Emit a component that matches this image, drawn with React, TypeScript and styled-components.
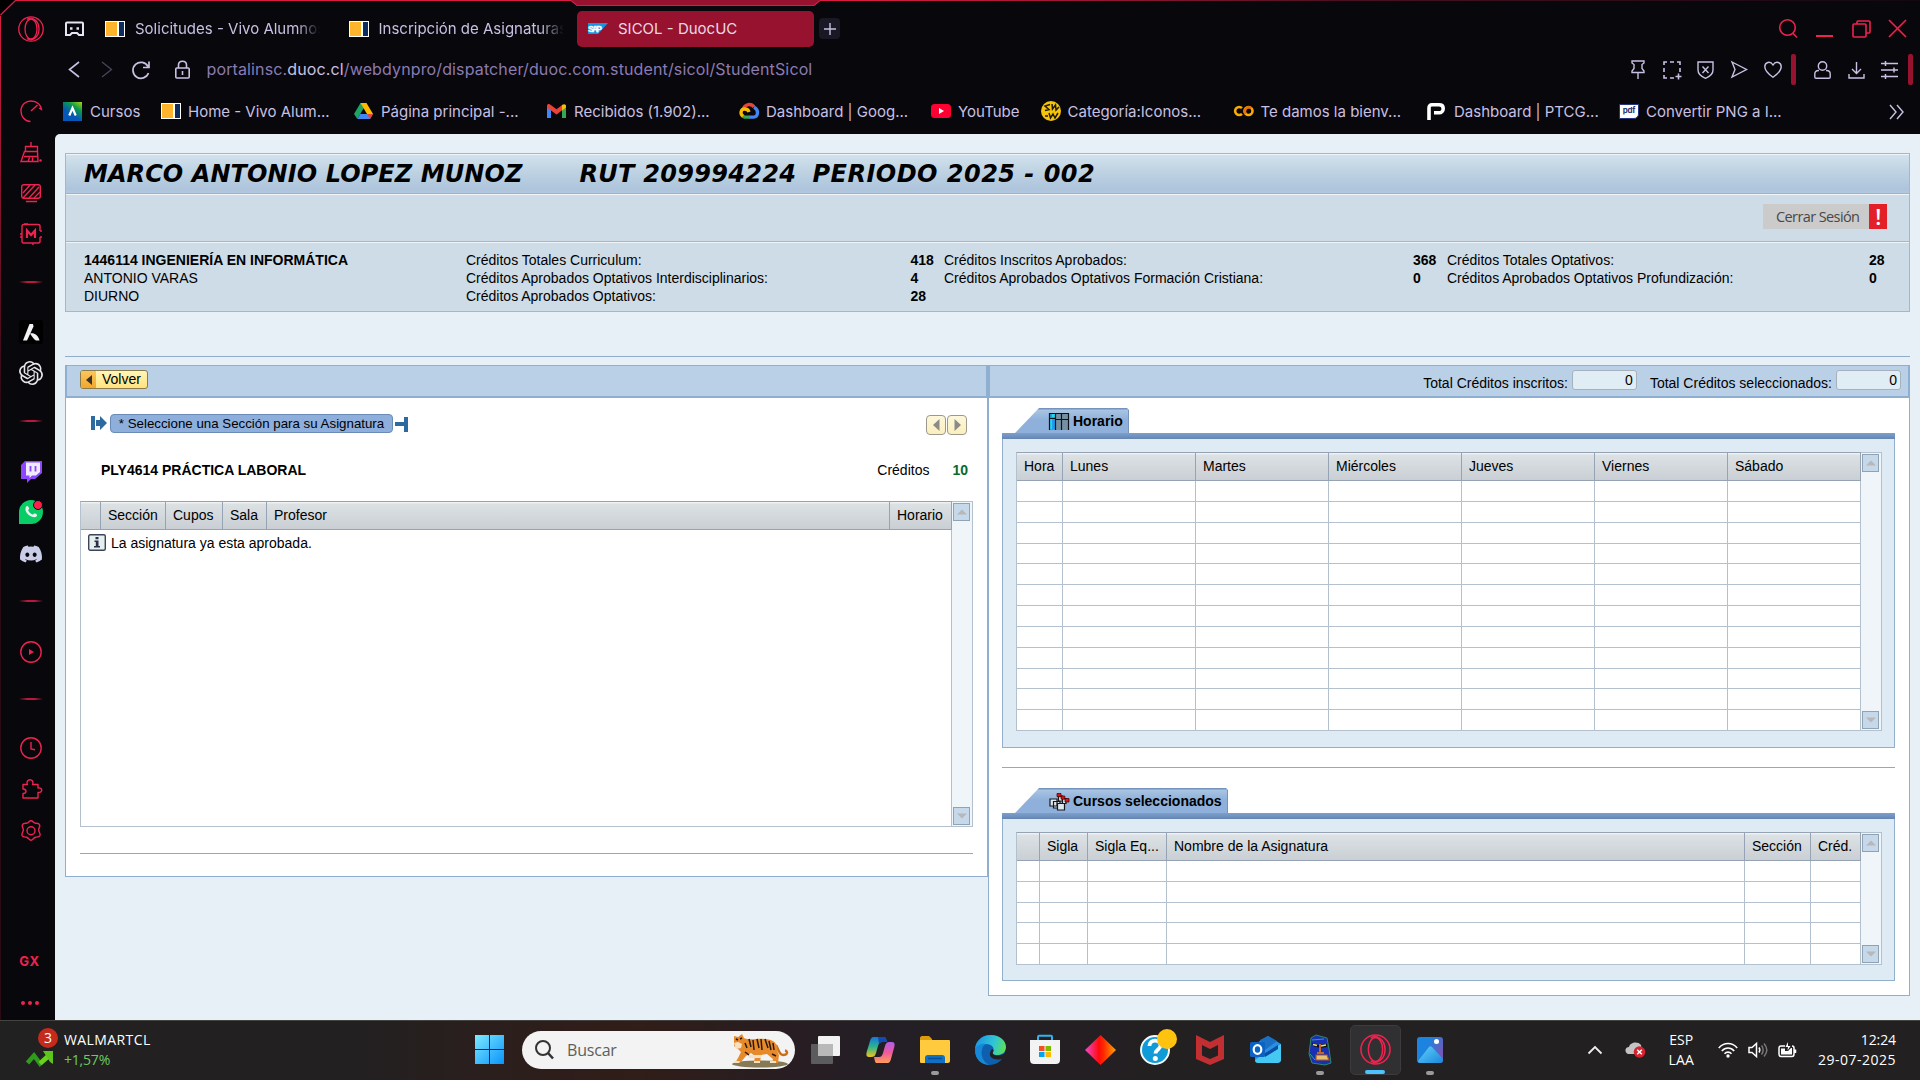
import React from "react";
import styled, { createGlobalStyle, css } from "styled-components";
import { FaDiscord } from "react-icons/fa";
import { SiOpenai } from "react-icons/si";

const RED = "#f0224f";
const LILAC = "#c9c0e2";
const UI = `Inter, "Noto Sans", sans-serif`;
const ARIAL = `"Liberation Sans", Arial, sans-serif`;
const SEGOE = `"Open Sans", "Noto Sans", sans-serif`;

const Global = createGlobalStyle`
  * { box-sizing: border-box; }
  html, body { margin: 0; padding: 0; background: #08070c; }
  body { width: 1920px; height: 1080px; overflow: hidden; }
  svg { display: block; flex: none; overflow: visible; }
`;

const Screen = styled.div`
  width: 1920px;
  height: 1080px;
  display: flex;
  flex-direction: column;
  background: #08070c;
`;

const Window = styled.div`
  position: relative;
  height: 1020px;
  display: flex;
  flex-direction: column;
`;

const Frame = styled.svg`
  position: absolute;
  left: 0;
  top: 0;
  pointer-events: none;
`;

/* ---------- browser chrome ---------- */

const TabStrip = styled.div`
  height: 56px;
  display: flex;
  align-items: center;
  padding: 1px 0 0 18px;
  font: 15px ${UI};
  color: ${LILAC};
`;

const Spacer = styled.div<{ $w: number }>`
  width: ${(p) => p.$w}px;
  flex: none;
`;

const Grow = styled.div`
  flex: 1;
`;

const Tab = styled.div<{ $w: number; $active?: boolean }>`
  width: ${(p) => p.$w}px;
  height: 36px;
  display: flex;
  align-items: center;
  gap: 10px;
  flex: none;
  border-radius: 5px;
  ${(p) =>
    p.$active &&
    css`
      background: #96122e;
      color: #ecd9e6;
      padding-left: 11px;
      gap: 10px;
    `}
`;

const TabTitle = styled.span<{ $fade?: boolean }>`
  white-space: nowrap;
  line-height: 22px;
  flex: none;
  ${(p) => p.$fade && css`mask-image: linear-gradient(90deg, #000 162px, transparent 185px);`}
`;

const NewTab = styled.div`
  width: 21px;
  height: 21px;
  margin-left: 5px;
  border-radius: 4px;
  background: #1a1824;
  display: flex;
  align-items: center;
  justify-content: center;
`;

const AddressRow = styled.div`
  height: 27px;
  display: flex;
  align-items: center;
  padding-left: 68px;
  font: 16px ${UI};
  color: #8b7bb0;
`;

const Url = styled.div`
  white-space: nowrap;
  line-height: 24px;
  letter-spacing: 0.13px;
  margin-top: -2px;
  b {
    font-weight: 400;
    color: ${LILAC};
  }
`;

const RedBar = styled.div`
  width: 5px;
  height: 31px;
  border-radius: 2px;
  background: #96122e;
`;

const Bookmarks = styled.div`
  height: 51px;
  padding: 6px 0 0 63px;
  display: flex;
  align-items: center;
  font: 15px ${UI};
  color: ${LILAC};
`;

const Bookmark = styled.div<{ $w: number }>`
  width: ${(p) => p.$w}px;
  flex: none;
  display: flex;
  align-items: center;
  gap: 8px;
  white-space: nowrap;
  line-height: 20px;
`;

const BookmarkIcon = styled.span`
  width: 19px;
  margin-top: -1px;
  flex: none;
`;

const VivoMark = styled.span`
  width: 20px;
  height: 16px;
  flex: none;
  border: 1px solid #fff;
  background: linear-gradient(90deg, #ffb52b 0 11px, #fff 11px 13px, #0d2b5c 13px);
`;

const Body = styled.div`
  flex: 1;
  display: flex;
  min-height: 0;
`;

const Sidebar = styled.div`
  width: 55px;
  margin-top: -40px;
  padding-left: 7px;
  display: flex;
  flex-direction: column;
  flex: none;
`;

const SideSlot = styled.div<{ $h: number }>`
  height: ${(p) => p.$h}px;
  flex: none;
  display: flex;
  align-items: center;
  justify-content: center;
`;

const SideLine = styled.div`
  width: 24px;
  height: 2px;
  background: linear-gradient(90deg, transparent, #b81a3d 35%, #b81a3d 65%, transparent);
`;

const SideFooter = styled.div`
  position: absolute;
  left: 0;
  bottom: 0;
  width: 62px;
  height: 70px;
  display: flex;
  flex-direction: column;
  align-items: center;
  justify-content: space-between;
  padding: 3px 0 15px;
`;

const GxLabel = styled.span`
  font: 700 13px ${UI};
  letter-spacing: 0.6px;
  color: ${RED};
  padding-right: 3px;
`;

const DotLabel = styled.div`
  display: flex;
  gap: 3px;
  padding-right: 3px;
  i {
    width: 4px;
    height: 4px;
    border-radius: 50%;
    background: ${RED};
  }
`;

/* ---------- SICOL page ---------- */

const Page = styled.main`
  flex: 1;
  padding: 19px 10px 0;
  background: #e8f0f7;
  border-top-left-radius: 5px;
  font: 14px ${ARIAL};
  color: #000;
`;

const StudentCard = styled.section`
  height: 159px;
  border: 1px solid #a4b7c8;
  background: #cedce7;
`;

const TitleBand = styled.h1`
  margin: 0;
  height: 40px;
  padding: 0 0 1px 18px;
  border-top: 1px solid #eef5fa;
  border-bottom: 1px solid #9fb2c6;
  background: linear-gradient(#d2e1ed, #bed2e2 45%, #adc4dc 90%, #b2c8dd);
  display: flex;
  align-items: center;
  white-space: pre;
  font: italic 700 24px "DejaVu Sans", Verdana, sans-serif;
`;

const TitlePart = styled.span<{ $w: number; $ls?: number }>`
  width: ${(p) => p.$w}px;
  flex: none;
  letter-spacing: ${(p) => p.$ls ?? 0}px;
`;

const ActionBand = styled.div`
  height: 48px;
  border-top: 1px solid #eef4f8;
  border-bottom: 1px solid #a4b7c8;
  display: flex;
  justify-content: flex-end;
  padding: 9px 22px 0 0;
`;

const Logout = styled.button`
  width: 124px;
  height: 25px;
  border: 0;
  padding: 0 0 0 13px;
  display: flex;
  align-items: center;
  justify-content: space-between;
  background: #cbcbcb;
  color: #484848;
  font: 14.5px "Open Sans", sans-serif;
  letter-spacing: -0.6px;
  b {
    width: 18px;
    height: 25px;
    background: #e32028;
    color: #fff;
    font: 600 22px/24px "Open Sans", sans-serif;
    text-align: center;
  }
`;

const Credits = styled.div`
  border-top: 1px solid #eef4f8;
  padding: 8px 0 0 18px;
  display: grid;
  grid-template-columns: 382px 444.5px 33.5px 469px 34px 422px auto;
  grid-auto-rows: 18px;
  line-height: 18px;
  b {
    font-weight: 700;
  }
`;

const Rule = styled.hr<{ $t: number; $b: number; $c?: string }>`
  border: 0;
  height: 1px;
  margin: ${(p) => p.$t}px 0 ${(p) => p.$b}px;
  background: ${(p) => p.$c ?? "#90aecb"};
`;

const Columns = styled.div`
  display: flex;
  align-items: flex-start;
`;

const Panel = styled.section<{ $w: number; $h: number }>`
  width: ${(p) => p.$w}px;
  height: ${(p) => p.$h}px;
  flex: none;
  background: #fff;
  border: 1px solid #90afd0;
`;

const PanelBar = styled.div<{ $right?: boolean }>`
  height: 32px;
  display: flex;
  background: #bad0e7;
  border: solid #8fafd2;
  border-width: 0 1px 2px;
  ${(p) =>
    p.$right
      ? css`
          justify-content: flex-end;
          padding: 4px 7px 0 0;
        `
      : css`
          padding: 4px 0 0 13px;
        `}
`;

const BackButton = styled.button`
  width: 68px;
  height: 19px;
  border: 1px solid #8b7a4a;
  border-radius: 3px;
  padding: 0;
  display: flex;
  align-items: center;
  gap: 6px;
  background: linear-gradient(#fff6b8, #ffe27e);
  font: 14px/16px ${ARIAL};
  color: #000;
  overflow: hidden;
`;

const BackText = styled.span`
  margin-top: -2px;
`;

const BackArrow = styled.span`
  width: 15px;
  height: 19px;
  background: linear-gradient(#fbc95c, #f0a52c);
  display: flex;
  align-items: center;
  justify-content: center;
`;

const TotalLabel = styled.label`
  line-height: 16px;
  margin: 5px 4px 0 13px;
`;

const TotalField = styled.output`
  width: 65px;
  height: 20px;
  border: 1px solid #a3b2bd;
  border-radius: 3px;
  background: #e1edf5;
  text-align: right;
  padding-right: 3px;
  line-height: 19px;
`;

const LeftBody = styled.div`
  padding: 16px 14px 0 14px;
`;

const Roadmap = styled.div`
  height: 21px;
  display: flex;
  align-items: flex-start;
  padding: 0 6px 0 11px;
`;

const StepPill = styled.div`
  width: 283px;
  height: 19px;
  margin: 0 2px 0 3px;
  border: 1px solid #6a8ab8;
  border-radius: 4px;
  background: #8eafdb;
  text-align: center;
  font-size: 13.3px;
  line-height: 17px;
`;

const ArrowButton = styled.button`
  width: 20px;
  height: 20px;
  margin: 1px 0 0 1px;
  padding: 0;
  border: 1px solid #9d988c;
  border-radius: 4px;
  background: linear-gradient(#fdf8dc, #fbefbe);
  display: flex;
  align-items: center;
  justify-content: center;
`;

const CourseRow = styled.div`
  height: 66px;
  padding: 4px 5px 0 21px;
  display: flex;
  align-items: center;
  b {
    font-weight: 700;
  }
`;

const CreditValue = styled.b`
  color: #0a6a2a;
  margin-left: 23px;
`;

const TableShell = styled.div<{ $h: number }>`
  height: ${(p) => p.$h}px;
  display: flex;
`;

const Grid = styled.div<{ $cols: string; $rows: string }>`
  display: grid;
  grid-template-columns: ${(p) => p.$cols};
  grid-template-rows: 28px ${(p) => p.$rows};
  border: solid #b3c1ce;
  border-width: 1px 0 0 1px;
  border-top-color: #96a3b5;
  background: #fff;
`;

const Th = styled.div`
  border: solid #96a3b5;
  border-width: 0 1px 1px 0;
  background: linear-gradient(#eef0f2 0 1px, #dce1e4 2px, #c9cfd4);
  padding-left: 7px;
  line-height: 26px;
  white-space: nowrap;
`;

const Td = styled.div`
  border: solid #b3c1ce;
  border-width: 0 1px 1px 0;
`;

const MessageCell = styled(Td)`
  grid-column: 1 / -1;
  padding: 4px 0 0 7px;
  display: flex;
  align-items: flex-start;
  gap: 5px;
  line-height: 18px;
`;

const Scroll = styled.div`
  width: 21px;
  border: 1px solid #b3c1ce;
  border-left: 0;
  background: #f0f5f9;
  padding: 1px 2px 1px 1px;
  display: flex;
  flex-direction: column;
  justify-content: space-between;
`;

const ScrollButton = styled.div`
  height: 18px;
  width: 17px;
  border: 1px solid #8fa3b5;
  background: #c5d9ea;
  display: flex;
  align-items: center;
  justify-content: center;
`;

const RightBody = styled.div`
  padding: 10px 14px 0 13px;
`;

const FolderTab = styled.div<{ $w: number }>`
  width: ${(p) => p.$w}px;
  height: 25px;
  margin-left: 13px;
  padding: 1px 0 0 34px;
  display: flex;
  align-items: center;
  gap: 4px;
  font-weight: 700;
  background: linear-gradient(#7593bd 0 1px, #a9c4e3 2px, #8eb0da 12px, #8eb0da);
  clip-path: polygon(0 100%, 24px 0, calc(100% - 2px) 0, 100% 2px, 100% 100%);
  border-right: 1px solid #7593bd;
  white-space: nowrap;
`;

const TabPanel = styled.div<{ $h: number }>`
  height: ${(p) => p.$h}px;
  border: 1px solid #92afcd;
  border-top: 0;
  background: #deeaf4;
  &::before {
    content: "";
    display: block;
    height: 6px;
    margin: 0 -1px;
    background: linear-gradient(#7d9fcc, #7093c1 50%, #6685b0);
  }
`;

const TabPanelInner = styled.div`
  padding: 13px 12px 0 13px;
`;

/* ---------- taskbar ---------- */

const Taskbar = styled.footer`
  height: 60px;
  border-top: 1px solid #454340;
  padding-bottom: 2px;
  display: flex;
  align-items: center;
  color: #fff;
  font: 14px/20px ${SEGOE};
  background: linear-gradient(
    90deg,
    #222121 0,
    #222021 350px,
    #2d1e1b 540px,
    #311d19 640px,
    #281d22 780px,
    #231f26 900px,
    #232021 1180px,
    #222020
  );
`;

const Widget = styled.div`
  width: 475px;
  padding-left: 26px;
  display: flex;
  align-items: center;
  gap: 10px;
`;

const WidgetIcon = styled.div`
  position: relative;
  width: 28px;
  height: 40px;
  display: flex;
  align-items: flex-end;
  padding-bottom: 3px;
`;

const Badge = styled.span`
  position: absolute;
  left: 12px;
  top: -2px;
  width: 20px;
  height: 20px;
  border-radius: 50%;
  background: #c42b1c;
  font-size: 14px;
  text-align: center;
  line-height: 20px;
`;

const Lines = styled.div<{ $align?: string }>`
  display: flex;
  flex-direction: column;
  line-height: 20px;
  text-align: ${(p) => p.$align ?? "left"};
  white-space: nowrap;
`;

const LineText = styled.span<{ $ls?: number; $c?: string }>`
  letter-spacing: ${(p) => p.$ls ?? 0}px;
  color: ${(p) => p.$c ?? "#fff"};
`;

const StartButton = styled.div`
  width: 47px;
`;

const SearchBox = styled.div`
  width: 273px;
  height: 38px;
  border-radius: 19px;
  background: #f3f3f3;
  display: flex;
  align-items: center;
  padding: 0 5px 0 13px;
  gap: 13px;
  color: #5e5e5e;
  font: 16px/22px ${SEGOE};
  letter-spacing: -0.2px;
`;

const AppSlot = styled.div<{ $active?: boolean }>`
  width: 51px;
  height: 50px;
  margin: 0 2px;
  border-radius: 5px;
  flex: none;
  display: flex;
  align-items: center;
  justify-content: center;
  position: relative;
  ${(p) =>
    p.$active &&
    css`
      background: #302f31;
      border: 1px solid #3c3b3d;
    `}
`;

const Running = styled.i<{ $active?: boolean }>`
  position: absolute;
  bottom: 0;
  left: 50%;
  width: ${(p) => (p.$active ? 20 : 8)}px;
  height: 4px;
  margin-left: ${(p) => (p.$active ? -10 : -4)}px;
  border-radius: 2px;
  background: ${(p) => (p.$active ? "#4cc2ff" : "#9a9a9a")};
`;

/* ---------- drawings ---------- */

const Line: React.FC<{
  w?: number; h?: number; vb?: string; c?: string; sw?: number; children: React.ReactNode;
}> = ({ w = 20, h = 20, vb, c = LILAC, sw = 1.4, children }) => (
  <svg width={w} height={h} viewBox={vb ?? `0 0 ${w} ${h}`} fill="none" stroke={c} strokeWidth={sw}>
    {children}
  </svg>
);

const OperaMark: React.FC<{ s: number }> = ({ s }) => (
  <svg width={s} height={s} viewBox="0 0 26 26" fill="none" stroke={RED} strokeWidth="1.3">
    <circle cx="13" cy="13" r="12.2" />
    <ellipse cx="13" cy="13" rx="6" ry="10" />
    <path d="M9 3.4C13 .2 21 4 21 13s-8 12.800-12 9.600" />
  </svg>
);

const Cursos = () => (
  <svg width="19" height="19" viewBox="0 0 19 19">
    <defs>
      <linearGradient id="cur" x1="1" y1="0" x2="0.300" y2="1">
        <stop offset="0" stopColor="#a6d80c" />
        <stop offset=".35" stopColor="#0a9a4c" />
        <stop offset=".7" stopColor="#0557b8" />
      </linearGradient>
    </defs>
    <path d="M0 0h19v19H0z" fill="url(#cur)" />
    <path d="M6.300 13.500 9.500 6 12.700 13.500" fill="none" stroke="#fff" strokeWidth="2.200" />
  </svg>
);

const Drive = () => (
  <svg width="19" height="17" viewBox="0 0 19 17">
    <path d="M6.500 0h6L9.500 5.500 3.300 16 0 11z" fill="#1ea362" />
    <path d="M6.500 0h6l6.500 11h-6z" fill="#ffba00" />
    <path d="M3.300 16 6.300 11H19l-3 5z" fill="#4285f4" />
    <path d="M13 11h6l-3 5z" fill="#ea4335" />
  </svg>
);

const Gmail = () => (
  <svg width="19" height="15" viewBox="0 0 19 15">
    <path d="M0 2v12h4V5z" fill="#4285f4" />
    <path d="M19 2v12h-4V5z" fill="#34a853" />
    <path d="M0 2C0 0 2-.5 3.500.7L9.500 5.300 15.500.7V6l-6 4.600L4 6.500 0 3.500z" fill="#ea4335" />
    <path d="M15 1.100C17-.5 19 .2 19 2v1.500L15 6.500z" fill="#fbbc04" />
  </svg>
);

const Cloud = () => (
  <svg width="20" height="16" viewBox="0 0 20 16" fill="none" strokeWidth="3.300">
    <path d="M4.500 5.500C6 1.500 12-.3 15 4" stroke="#ea4335" />
    <path d="M15 4.200C20 6.500 19.500 14 14.500 14.200H10" stroke="#4285f4" />
    <path d="M10.500 14.200H5.500L3.500 13" stroke="#34a853" />
    <path d="M4 13.300C.5 10.500 2 6 5.500 6c2 0 4 1 4.500 3" stroke="#fbbc04" />
  </svg>
);

const YouTube = () => (
  <svg width="20" height="14" viewBox="0 0 20 14">
    <rect width="20" height="14" rx="3.500" fill="#ff0033" />
    <path d="M8 4v6l5-3z" fill="#fff" />
  </svg>
);

const Wiki = () => (
  <svg width="20" height="20" viewBox="0 0 20 20">
    <circle cx="10" cy="10" r="10" fill="#f6c40a" />
    <path d="M9 3.500 4 5l4 3.500-4 1M11 3l.5 5 3-4 .5 5 3-3M4 15h3M8 12l1.500 5L12 13l2 4 3-5" fill="none" stroke="#1c1a10" strokeWidth="1.500" />
  </svg>
);

const Colab = () => (
  <svg width="20" height="12" viewBox="0 0 20 12" fill="none" strokeWidth="2.600">
    <path d="M8 3.200A4 4 0 1 0 8 8.800" stroke="#f9ab00" />
    <circle cx="14.500" cy="6" r="4" stroke="#f9ab00" />
    <path d="M11.700 8.800A4 4 0 0 1 17.300 3.200" stroke="#e8710a" />
  </svg>
);

const PMark = () => (
  <svg width="18" height="17" viewBox="0 0 18 17" fill="none" stroke="#fff" strokeWidth="3.600">
    <path d="M2 17V5c0-2 1-3.200 3-3.200h7c2.500 0 4.200 1.200 4.200 3.600S14.500 9.800 12 9.800H7" />
  </svg>
);

const PdfBox = styled.span`
  display: block;
  width: 20px;
  height: 15px;
  background: #fff;
  border: 1px solid #26327a;
  color: #26327a;
  font: 700 8px/10px ${UI};
  border-bottom-right-radius: 5px;
  letter-spacing: -0.2px;
  text-align: center;
`;

const SapMark = () => (
  <svg width="20" height="11" viewBox="0 0 20 11">
    <path d="M0 0h20L10 11H0z" fill="#1298e0" />
    <text x="0" y="8.500" fontFamily="Liberation Sans" fontWeight="700" fontSize="8.500" fill="#fff" stroke="#fff" strokeWidth=".4" textLength="14">SAP</text>
  </svg>
);

const Tri: React.FC<{ d: string; w?: number; h?: number; c?: string }> = ({ d, w = 10, h = 6, c = "#b9b7b8" }) => (
  <svg width={w} height={h} viewBox={`0 0 ${w} ${h}`}>
    <path d={d} fill={c} />
  </svg>
);

const InfoIcon = () => (
  <svg width="18" height="17" viewBox="0 0 18 17">
    <rect x=".7" y=".7" width="16.600" height="15.600" rx="1.500" fill="#e4efee" stroke="#3b4458" strokeWidth="1.400" />
    <path d="M7.500 3h3v2.200h-3zM6.500 6.500h4V12H12v1.600H6V12h1.800V8H6.500z" fill="#2b2f48" />
  </svg>
);

const CalendarIcon = () => (
  <svg width="20" height="17" viewBox="0 0 20 17">
    <path d="M0 0h20v17H0z" fill="#7590a0" />
    <path d="M1 1h5v15H1z" fill="#1d9df0" />
    <path d="M1 6h2v10H1zM3 1h3v3H3z" fill="#22d6ec" />
    <path d="M.5 17V.5h19V17M6.500 1v16M12.500 1v16M6 6.500h14M1 5.500h5" fill="none" stroke="#0b1116" strokeWidth="1.200" />
  </svg>
);

const CoursesIcon = () => (
  <svg width="20" height="17" viewBox="0 0 20 17">
    <g fill="#dfe6ec" stroke="#15181c" strokeWidth="1.200">
      <path d="M9.500 3h4v5h-4zM13.500 5.500h3.500v5h-3.500z" />
      <path d="M1 6h7v7H1zM4.500 8.500H11V15H4.500z" />
      <path d="M8.500 10.500h7V17h-7z" />
    </g>
    <path d="M8 .5h4v3.200H8zM12 3h3.800v3.200H12zM16 5.500h4V9h-4z" fill="#e01414" stroke="#300" strokeWidth=".7" />
  </svg>
);

const Tiger = () => (
  <svg width="58" height="34" viewBox="0 0 58 34">
    <ellipse cx="28" cy="31" rx="28" ry="3.500" fill="#857956" />
    <path d="M44 12c3 5 3 10 7 10 5 0 5-4 2-4.500" fill="none" stroke="#c96f1c" strokeWidth="2.400" />
    <path d="M2 3l4 1 4-3 2 4c6 3 14 0 20 1 7 0 11 2 13 7 1 4 0 6 2 9l-1 8h-6l1-4-6-5-6 1-1 8h-6l1-7-4-3-5 3-6 7H3l3-5 3-6-3-3-4-3z" fill="#e68a2c" />
    <path d="M2 10l4-1 4 2-1 4-5 1zM16 22l8 0 6 0-1 3-12 0zM2 28h6l-1 2H2zM22 28h6v2h-6zM38 28h6v2h-6z" fill="#f6e0c4" />
    <path d="M17 6l2 8M21 7l1 10M25 6l2 9M29 6l1 11M33 6l3 9M37 8l2 9M41 10l1 7M13 10l2 5M4 6l2 1M8 6l2-1M40 21l4 2M13 19l4 3" stroke="#2c1a0c" strokeWidth="1.500" fill="none" />
  </svg>
);

const apps: { icon: React.ReactNode; running?: boolean; active?: boolean }[] = [
  {
    icon: (
      <svg width="29" height="28" viewBox="0 0 29 28">
        <rect x="0" y="8" width="22" height="20" rx="1" fill="#5c5b5d" />
        <rect x="7" y="0" width="22" height="20" rx="1" fill="#f2f2f2" />
        <path d="M7 8h15v12H7z" fill="#b9b9ba" />
      </svg>
    ),
  },
  {
    icon: (
      <svg width="29" height="26" viewBox="0 0 29 26">
        <defs>
          <linearGradient id="cpa" x1="0" y1="0" x2="0" y2="1">
            <stop offset="0" stopColor="#1377dd" /><stop offset=".5" stopColor="#2db58c" /><stop offset="1" stopColor="#f2c61c" />
          </linearGradient>
          <linearGradient id="cpb" x1="0" y1="0" x2="0" y2="1">
            <stop offset="0" stopColor="#b25cf0" /><stop offset=".5" stopColor="#ee5a9a" /><stop offset="1" stopColor="#ff9d5a" />
          </linearGradient>
        </defs>
        <path d="M7 0h11c2 0 2 2 3 5h-5c-2 0-3 1-4 4l-2 7c-1 3-2 4-5 4H3c-3 0-3-3-2-6L4 4C5 1 6 0 7 0z" fill="url(#cpa)" />
        <path d="M22 26H11c-2 0-2-2-3-6h5c2 0 3-1 4-4l2-7c1-3 2-4 4-4h3c3 0 3 3 2 6l-3 11c-1 3-2 4-3 4z" fill="url(#cpb)" />
        <path d="M12 0h6c2 0 2 2 3 5h-5c-2 0-2 1-3 2z" fill="#1248b8" />
      </svg>
    ),
  },
  {
    running: true,
    icon: (
      <svg width="30" height="27" viewBox="0 0 30 27">
        <path d="M0 2c0-1 1-2 2-2h7l3 3v4H0z" fill="#dd9a0c" />
        <path d="M0 4h29c1 0 1 1 1 1v20c0 1-1 2-2 2H1c-1 0-1-1-1-2z" fill="#ffca3e" />
        <path d="M5 27v-5c0-2 1-3 3-3h14c2 0 3 1 3 3v5z" fill="#0f70c4" />
        <path d="M8 22.500h14" stroke="#0a4f96" strokeWidth="1.500" />
      </svg>
    ),
  },
  {
    icon: (
      <svg width="31" height="30" viewBox="0 0 31 30">
        <defs>
          <linearGradient id="edg" x1="0" y1=".3" x2="1" y2=".5">
            <stop offset="0" stopColor="#1a94e0" /><stop offset=".6" stopColor="#31c4d8" /><stop offset="1" stopColor="#5be05a" />
          </linearGradient>
        </defs>
        <circle cx="15" cy="15" r="15" fill="#0e60ae" />
        <path d="M0 15C0 6 7 0 16 0c9 0 15 6 15 12 0 6-5 8-9 8-3 0-5-1-4-3 2-4-1-8-7-8-5 0-9 2-11 6z" fill="url(#edg)" />
        <path d="M0 15c2-5 7-7 11-6-4 2-5 7-4 12 1 4 4 8 8 9C6 30 0 24 0 15z" fill="#1787d8" />
        <path d="M18 17c-1 2 1 3.500 5 3.500 3 0 5-1 7-2.500l1 1-2 4c-2 1-4 1.500-6 1.500-6 0-9-3-8-6.500.500-2 1.500-4 2.500-4 1 1 1.500 2 .5 3z" fill="#232021" />
      </svg>
    ),
  },
  {
    icon: (
      <svg width="30" height="29" viewBox="0 0 30 29">
        <path d="M8 6V2c0-1 1-1.200 1-1.200h12c1 0 1 1 1 1.200v4" fill="none" stroke="#2fb4ee" strokeWidth="2" />
        <path d="M0 5h30v20c0 3-2 4-4 4H4c-2 0-4-1-4-4z" fill="#f3f3f3" />
        <path d="M9 11h5.500v5H9z" fill="#f25022" /><path d="M15.500 11H21v5h-5.500z" fill="#7fba00" />
        <path d="M9 17h5.500v5H9z" fill="#00a4ef" /><path d="M15.500 17H21v5h-5.500z" fill="#ffb900" />
      </svg>
    ),
  },
  {
    icon: (
      <svg width="31" height="30" viewBox="0 0 31 30">
        <defs>
          <linearGradient id="dia"><stop offset="0" stopColor="#f04ad0" /><stop offset=".45" stopColor="#ff0a0a" /><stop offset=".6" stopColor="#ff2a00" /><stop offset="1" stopColor="#ffa400" /></linearGradient>
        </defs>
        <path d="M15.500 0 31 15 15.500 30 0 15z" fill="url(#dia)" />
      </svg>
    ),
  },
  {
    icon: (
      <svg width="31" height="30" viewBox="0 0 31 30">
        <circle cx="15" cy="15" r="14" fill="#0f9ad8" stroke="#f2f8fb" strokeWidth="2" />
        <path d="M9.500 11c0-7 11-7 11-.5 0 4-5 4-5 8" fill="none" stroke="#fff" strokeWidth="3.800" />
        <circle cx="15.300" cy="23.500" r="2.500" fill="#fff" />
        <circle cx="27" cy="4" r="10" fill="#ffc20e" />
      </svg>
    ),
  },
  {
    icon: (
      <svg width="28" height="30" viewBox="0 0 28 30">
        <path d="M0 0l14 7L28 0v24l-14 6L0 24zM6 10v10.500l8 3.500 8-3.500V10l-8 4z" fill="#c22f32" fillRule="evenodd" />
      </svg>
    ),
  },
  {
    icon: (
      <svg width="31" height="27" viewBox="0 0 31 27">
        <path d="M5 8 18 0l13 8v15c0 2-1 4-4 4H9c-3 0-4-2-4-4z" fill="#2a8fe0" />
        <path d="M10 4 18 0l9 5-12 9z" fill="#1a6fc4" />
        <path d="M15 17 31 8v16c0 2-2 3-4 3H8c-2 0-3-1-3-3z" fill="#45c8f2" />
        <path d="M15 17l13-8v4L15 21z" fill="#0b4da0" />
        <rect y="6" width="15" height="15" rx="1.500" fill="#0a62c4" />
        <ellipse cx="7.500" cy="13.500" rx="3.800" ry="4.300" fill="none" stroke="#fff" strokeWidth="2.200" />
      </svg>
    ),
  },
  {
    running: true,
    icon: (
      <svg width="24" height="30" viewBox="0 0 24 30">
        <path d="M3 3 8 0l11 3 2 11 2 14-6 2-13-2-3-9z" fill="#1730b4" stroke="#2c8a66" strokeWidth="1" />
        <path d="M4 8l6 2 9-1v3l-7 1-7-2z" fill="#101010" />
        <path d="M5 9.500l4 1M13 11l5-1" stroke="#efe05c" strokeWidth="1.500" />
        <path d="M12 9v8M9 18h7" stroke="#c2672c" strokeWidth="2" />
        <path d="M8 20h11l2 5-13 0z" fill="#e6c070" stroke="#b5531c" strokeWidth="1.200" />
        <path d="M2 19l5 6M4 5l12-1" stroke="#37a07a" strokeWidth="1" />
      </svg>
    ),
  },
  { running: true, active: true, icon: <OperaMark s={31} /> },
  {
    running: true,
    icon: (
      <svg width="26" height="26" viewBox="0 0 26 26">
        <defs>
          <linearGradient id="pho" x1="0" y1="0" x2="1" y2=".6"><stop offset=".4" stopColor="#1b84e0" /><stop offset="1" stopColor="#7a55b4" /></linearGradient>
          <linearGradient id="phm" x1="0" y1="0" x2="1" y2="1"><stop offset="0" stopColor="#5fd4fb" /><stop offset="1" stopColor="#1a86dc" /></linearGradient>
        </defs>
        <rect width="26" height="26" rx="3" fill="url(#pho)" />
        <path d="M1 24 12 10c1-1 2-1 3 0l11 12v1c0 2-1 3-3 3H3c-1 0-2-1-2-2z" fill="url(#phm)" />
        <circle cx="19.500" cy="4.500" r="2.500" fill="#fff" />
      </svg>
    ),
  },
];

/* ---------- data ---------- */

const bookmarks: { w: number; icon: React.ReactNode; label: string }[] = [
  { w: 98, icon: <Cursos />, label: "Cursos" },
  { w: 193, icon: <VivoMark as="div" />, label: "Home - Vivo Alum..." },
  { w: 193, icon: <Drive />, label: "Página principal -..." },
  { w: 192, icon: <Gmail />, label: "Recibidos (1.902)..." },
  { w: 192, icon: <Cloud />, label: "Dashboard | Goog..." },
  { w: 109.5, icon: <YouTube />, label: "YouTube" },
  { w: 193, icon: <Wiki />, label: "Categoría:Iconos..." },
  { w: 193.5, icon: <Colab />, label: "Te damos la bienv..." },
  { w: 192, icon: <PMark />, label: "Dashboard | PTCG..." },
  { w: 180, icon: <PdfBox>pdf</PdfBox>, label: "Convertir PNG a I..." },
];

const days = ["Hora", "Lunes", "Martes", "Miércoles", "Jueves", "Viernes", "Sábado"];
const courseCols = ["", "Sigla", "Sigla Eq...", "Nombre de la Asignatura", "Sección", "Créd."];
const sectionCols = ["", "Sección", "Cupos", "Sala", "Profesor", "Horario"];

const ScrollBar = () => (
  <Scroll>
    <ScrollButton><Tri d="M0 5.500 5 .5l5 5z" /></ScrollButton>
    <ScrollButton><Tri d="M0 .5h10l-5 5z" /></ScrollButton>
  </Scroll>
);

const EmptyTable: React.FC<{ h: number; cols: string; heads: string[]; rows: number }> = ({ h, cols, heads, rows }) => (
  <TableShell $h={h}>
    <Grid $cols={cols} $rows={`repeat(${rows}, 1fr)`}>
      {heads.map((t, i) => <Th key={i}>{t}</Th>)}
      {Array.from({ length: rows * heads.length }, (_, i) => <Td key={i} />)}
    </Grid>
    <ScrollBar />
  </TableShell>
);

const SideIcons = () => (
  <Sidebar>
    <SideSlot $h={34}>
      <Line w={22} h={22} c={RED}><path d="M10.500 21.500C4 21 1 16 1 11 1 4.500 6 1 11 1c6 0 10 4 10.500 8.500L19 8M11 11l6.500-6" /></Line>
    </SideSlot>
    <SideSlot $h={48}>
      <Line w={22} h={21} c={RED}><path d="M11 0v4M5.500 9.500V4.500h12v5M4.500 9.500h13l.5 10H1zM8 19.500l1.500-4M12.500 19.500v-4M4 14.500h14" /><circle cx="20.500" cy="18.500" r="1.300" fill={RED} stroke="none" /></Line>
    </SideSlot>
    <SideSlot $h={33}>
      <Line w={20} h={18} c={RED}><rect x=".7" y=".7" width="18.600" height="13.600" rx="2" /><path d="M2 9 9 1M2 14 14 1M8 14 18 3M13 14l6-6M5 17.500h11" /></Line>
    </SideSlot>
    <SideSlot $h={49}>
      <Line w={22} h={22} c={RED}><path d="M2 8V3c0-1 .5-1.500 1.500-1.500H18c1 0 2 .5 2 1.500v5M2 13v5c0 1 .5 2 1.500 2H18c1 0 2-.5 2-1.500V14M2 8v6M0 11h2M0 14h2M20 8h2M20 14h2M7 0v1M13 20v2M5 0v1" /><path d="M7 15V7.500l4 4.500 4-4.500V15" strokeWidth="2.200" /></Line>
    </SideSlot>
    <SideSlot $h={48}><SideLine /></SideSlot>
    <SideSlot $h={51}>
      <svg width="24" height="24" viewBox="0 0 24 24"><rect width="24" height="24" rx="3" fill="#000" /><path d="M4 20.500 10.500 4h3.500l.5 2.500L8 20.500z" fill="#f2f2f2" /><path d="M11 13.500c4-1 8 1.500 9.500 7h-3.500c-2-1-4-4-6-7z" fill="#f2f2f2" /></svg>
    </SideSlot>
    <SideSlot $h={32}><SiOpenai size={24} color="#e6e6ea" /></SideSlot>
    <SideSlot $h={64}><SideLine /></SideSlot>
    <SideSlot $h={37}>
      <svg width="21" height="22" viewBox="0 0 21 22"><path d="M0 4 4 0h17v12l-7 6h-4l-4 4v-4H0z" fill="#8f46ff" /><path d="M5 1.500h14V11l-4 3.500h-4L8.500 17v-2.500H5z" fill="#efeafc" /><path d="M9.500 5v5.500M14.500 5v5.500" stroke="#8f46ff" strokeWidth="1.800" /></svg>
    </SideSlot>
    <SideSlot $h={43}>
      <svg width="24" height="24" viewBox="0 0 24 24"><path d="M0 24V12A12 12 0 1 1 12 24H5z" fill="#08cc66" /><path d="M7 6.500c1.500-1.500 2.500 0 3 1.500.5 1.200-1.500 1.500-.5 3 1 1.800 2.500 3 4 3.500 1 .3 1-1.500 2.500-1s3 1.500 1.500 3c-3 3-12-3-11-8z" fill="#efeff2" /><circle cx="19" cy="5" r="4.500" fill="#ff1f4b" stroke="#08070c" strokeWidth="1" /></svg>
    </SideSlot>
    <SideSlot $h={41}><FaDiscord size={24} color="#c9cde8" /></SideSlot>
    <SideSlot $h={54}><SideLine /></SideSlot>
    <SideSlot $h={48}>
      <Line w={22} h={22} c={RED}><circle cx="11" cy="11" r="10.200" /><path d="M9 8v6l5-3z" fill={RED} stroke="none" /></Line>
    </SideSlot>
    <SideSlot $h={46}><SideLine /></SideSlot>
    <SideSlot $h={51}>
      <Line w={22} h={22} c={RED}><circle cx="11" cy="11" r="10.200" /><path d="M11 5v7l4 .8" /></Line>
    </SideSlot>
    <SideSlot $h={31}>
      <Line w={21} h={20} c={RED}><path d="M2 5.500h4.500C5 2.500 7 .8 9 .8s4 1.700 2.500 4.700H17V9c5-1 5 5 0 4.500V19H2v-4.500c4 0 4-4.500 0-4.500z" strokeLinejoin="round" /></Line>
    </SideSlot>
    <SideSlot $h={54}>
      <Line w={22} h={22} c={RED}><path d="M11 .8c2 0 2.500 2.500 4.500 2.500 1.500 0 3.500-.3 4.200 1.700.6 2-1.200 3-1 5 0 2.500 2 3 1.300 5.500-.8 2-2.800 1.500-4.500 1.700-2 .3-2.500 3-4.500 3s-2.500-2.700-4.500-3c-1.700-.2-3.700.3-4.500-1.700C1.300 13 3.300 12.500 3.300 10c.2-2-1.600-3-1-5C3 3 5 3.300 6.500 3.300 8.500 3.300 9 .8 11 .8z" /><circle cx="11" cy="10.700" r="4" /></Line>
    </SideSlot>
  </Sidebar>
);

export default function App() {
  return (
    <Screen>
      <Global />
      <Window>
        <TabStrip>
          <OperaMark s={26} />
          <Spacer $w={21} />
          <Line w={19} h={16} c="#e8e4f4" sw={2}>
            <path d="M2 1.500h15c.5 0 1 .5 1 1V14h-4l-2-2H7l-2 2H1V2.500c0-.5.500-1 1-1z" />
            <path d="M5 7.500h2.500M11.500 7.500H14" strokeWidth="2.600" />
          </Line>
          <Spacer $w={21} />
          <Tab $w={243.5}><VivoMark /><TabTitle $fade>Solicitudes - Vivo Alumnos</TabTitle></Tab>
          <Tab $w={228.5}><VivoMark /><TabTitle $fade>Inscripción de Asignaturas</TabTitle></Tab>
          <Tab $w={237} $active><SapMark /><TabTitle>SICOL - DuocUC</TabTitle></Tab>
          <NewTab><Line w={12} h={12}><path d="M6 0v12M0 6h12" /></Line></NewTab>
          <Grow />
          <Line w={19} h={19} c={RED} sw={1.6}><circle cx="8.500" cy="8.500" r="7.800" /><path d="m13.500 14 4.500 4.500" /></Line>
          <Spacer $w={18} />
          <Line w={17} h={18} c={RED} sw={2}><path d="M0 16h17" /></Line>
          <Spacer $w={19} />
          <Line w={19} h={18} c={RED} sw={1.6}><rect x="1" y="4" width="13" height="13" rx="1" /><path d="M5 4V2c0-.6.400-1 1-1h11c.6 0 1 .400 1 1v10c0 .6-.4 1-1 1h-3" /></Line>
          <Spacer $w={18} />
          <Line w={17} h={17} c={RED} sw={1.6}><path d="M0 0l17 17M17 0 0 17" /></Line>
          <Spacer $w={14} />
        </TabStrip>

        <AddressRow>
          <Line w={12} h={15} sw={1.6}><path d="M11 0 1.500 7.500 11 15" /></Line>
          <Spacer $w={21} />
          <Line w={12} h={15} sw={1.3} c="#4a455c"><path d="M1 0l9.500 7.500L1 15" /></Line>
          <Spacer $w={18.5} />
          <Line w={18} h={18} sw={1.7}><path d="M16 5.500A8 8 0 1 0 16.500 12M17 .5v6h-6" /></Line>
          <Spacer $w={25} />
          <Line w={15} h={19} sw={1.6}><rect x=".8" y="8" width="13.400" height="10" rx="1" /><path d="M3.500 8V5c0-5 8-5 8 0v3M7.500 11v4" /></Line>
          <Spacer $w={17} />
          <Url>portalinsc.<b>duoc.cl</b>/webdynpro/dispatcher/duoc.com.student/sicol/StudentSicol</Url>
          <Grow />
          <Line w={14} h={19}><path d="M1 1h12v2l-2 1.500v4l2 2.500v1.500H1V11l2-2.500v-4L1 3zM7 12.500V19" /></Line>
          <Spacer $w={18} />
          <Line w={19} h={18} sw={1.6}><path d="M1 4V1h3M7 1h4M14 1h3v3M17 7v4M1 7v4M1 14v3h3M7 17h4M12.500 15.500h6M15.500 12.500v6" /></Line>
          <Spacer $w={15} />
          <Line w={17} h={18}><path d="M1 1h15v8c0 4-3 6.500-7.500 8.300C4 15.500 1 13 1 9zM5.500 5.500l6 6.500M11.500 5.500l-6 6.500" /></Line>
          <Spacer $w={17} />
          <Line w={16} h={17}><path d="M1 1l14.500 7.500L1 16l3-7.500z" /></Line>
          <Spacer $w={17} />
          <Line w={18} h={17}><path d="M9 16.300C5 13.500.8 10 .8 5.800.8 1.500 6-.8 9 4c3-4.800 8.200-2.500 8.200 1.800 0 4.200-4.200 7.700-8.200 10.500z" /></Line>
          <Spacer $w={9} />
          <RedBar />
          <Spacer $w={18} />
          <Line w={17} h={18}><circle cx="8.500" cy="5" r="4.200" /><path d="M5 9.500h-.500C2 9.500.8 11 .8 13v3c0 .8.500 1.200 1.200 1.200h13c.7 0 1.200-.4 1.200-1.200v-3c0-2-1.200-3.500-3.700-3.500H12" /></Line>
          <Spacer $w={17} />
          <Line w={17} h={18}><path d="M8.500 1v11M4 8l4.500 4.500L13 8M1 13v4h15v-4" /></Line>
          <Spacer $w={16} />
          <Line w={17} h={18} sw={1.5}><path d="M0 2.500h17M0 9h17M0 15.500h17M4.500 0v5M13 6.500v5M4.500 13v5" /></Line>
          <Spacer $w={10} />
          <RedBar />
          <Spacer $w={7} />
        </AddressRow>

        <Bookmarks>
          {bookmarks.map((b) => (
            <Bookmark key={b.label} $w={b.w}><BookmarkIcon>{b.icon}</BookmarkIcon>{b.label}</Bookmark>
          ))}
          <Grow />
          <Line w={15} h={14}><path d="M1 0l6 7-6 7M8 0l6 7-6 7" /></Line>
          <Spacer $w={16} />
        </Bookmarks>

        <Body>
          <SideIcons />
          <Page>
            <StudentCard>
              <TitleBand>
                <TitlePart $w={495.5} $ls={0.08}>MARCO ANTONIO LOPEZ MUNOZ</TitlePart>
                <TitlePart $w={233} $ls={0.28}>RUT 209994224</TitlePart>
                <TitlePart $w={300} $ls={0.48}>PERIODO 2025 - 002</TitlePart>
              </TitleBand>
              <ActionBand><Logout>Cerrar Sesión<b>!</b></Logout></ActionBand>
              <Credits>
                <b>1446114 INGENIERÍA EN INFORMÁTICA</b>
                <span>Créditos Totales Curriculum:</span><b>418</b>
                <span>Créditos Inscritos Aprobados:</span><b>368</b>
                <span>Créditos Totales Optativos:</span><b>28</b>
                <span>ANTONIO VARAS</span>
                <span>Créditos Aprobados Optativos Interdisciplinarios:</span><b>4</b>
                <span>Créditos Aprobados Optativos Formación Cristiana:</span><b>0</b>
                <span>Créditos Aprobados Optativos Profundización:</span><b>0</b>
                <span>DIURNO</span>
                <span>Créditos Aprobados Optativos:</span><b>28</b>
              </Credits>
            </StudentCard>
            <Rule $t={44} $b={8} />
            <Columns>
              <Panel $w={923} $h={512}>
                <PanelBar>
                  <BackButton>
                    <BackArrow><Tri w={6} h={10} d="M6 0v10L0 5z" c="#3a3328" /></BackArrow>
                    <BackText>Volver</BackText>
                  </BackButton>
                </PanelBar>
                <LeftBody>
                  <Roadmap>
                    <svg width="16" height="16" viewBox="0 -2 16 16"><path d="M0 0h4v14H0zM5 4h4V0l7 7-7 7v-4H5z" fill="#2d6a9f" /></svg>
                    <StepPill>* Seleccione una Sección para su Asignatura</StepPill>
                    <svg width="13" height="18" viewBox="0 -3 13 18"><path d="M0 5h9V0h4v15H9V9H0z" fill="#2d6a9f" /></svg>
                    <Grow />
                    <ArrowButton><Tri w={7} h={12} d="M6.500 0v12L0 6z" c="#8d8b88" /></ArrowButton>
                    <ArrowButton><Tri w={7} h={12} d="M.5 0v12L7 6z" c="#8d8b88" /></ArrowButton>
                  </Roadmap>
                  <CourseRow>
                    <b>PLY4614 PRÁCTICA LABORAL</b>
                    <Grow />
                    <span>Créditos</span>
                    <CreditValue>10</CreditValue>
                  </CourseRow>
                  <TableShell $h={326}>
                    <Grid $cols="20px 65px 57px 44px 623px 62px" $rows="1fr">
                      {sectionCols.map((t, i) => <Th key={i}>{t}</Th>)}
                      <MessageCell><InfoIcon />La asignatura ya esta aprobada.</MessageCell>
                    </Grid>
                    <ScrollBar />
                  </TableShell>
                  <Rule $t={26} $b={0} $c="#94a8c6" />
                </LeftBody>
              </Panel>
              <Panel $w={922} $h={631}>
                <PanelBar $right>
                  <TotalLabel>Total Créditos inscritos:</TotalLabel>
                  <TotalField>0</TotalField>
                  <TotalLabel>Total Créditos seleccionados:</TotalLabel>
                  <TotalField>0</TotalField>
                </PanelBar>
                <RightBody>
                  <FolderTab $w={114}><CalendarIcon />Horario</FolderTab>
                  <TabPanel $h={315}>
                    <TabPanelInner>
                      <EmptyTable h={279} cols="46px repeat(6, 133px)" heads={days} rows={12} />
                    </TabPanelInner>
                  </TabPanel>
                  <Rule $t={19} $b={20} $c="#94a8c6" />
                  <FolderTab $w={213}><CoursesIcon />Cursos seleccionados</FolderTab>
                  <TabPanel $h={168}>
                    <TabPanelInner>
                      <EmptyTable h={133} cols="23px 48px 79px 578px 66px 50px" heads={courseCols} rows={5} />
                    </TabPanelInner>
                  </TabPanel>
                </RightBody>
              </Panel>
            </Columns>
          </Page>
        </Body>

        <Frame width="1920" height="1020" viewBox="0 0 1920 1020">
          <defs>
            <linearGradient id="edgeTop" gradientUnits="userSpaceOnUse" x1="0" y1="0" x2="1920" y2="0">
              <stop offset=".45" stopColor="#d81c45" /><stop offset=".7" stopColor="#4a1020" /><stop offset="1" stopColor="#120810" />
            </linearGradient>
            <linearGradient id="edgeLeft" gradientUnits="userSpaceOnUse" x1="0" y1="15" x2="0" y2="400">
              <stop offset="0" stopColor="#d81c45" /><stop offset="1" stopColor="#2c0a14" />
            </linearGradient>
          </defs>
          <path d="M0 0h14L0 14z" fill="#000" />
          <path d="M571 0l6 5.500h237l6-5.500z" fill="#96122e" />
          <path d="M.5 1020V16" stroke="url(#edgeLeft)" fill="none" />
          <path d="M.5 15 15.500.5H571l6 5h237l6-5h1100" stroke="url(#edgeTop)" fill="none" strokeWidth="1.200" />
        </Frame>
        <SideFooter>
          <GxLabel>GX</GxLabel>
          <DotLabel><i /><i /><i /></DotLabel>
        </SideFooter>
      </Window>

      <Taskbar>
        <Widget>
          <WidgetIcon>
            <svg width="28" height="16" viewBox="0 0 28 16"><path d="M1.500 12 8 4.500l6 8L25 2" fill="none" stroke="#2f9a1c" strokeWidth="4.500" /><path d="M14 12.500 24 4" stroke="#6fd01c" strokeWidth="4.500" /><path d="M17 0h10v13l-3-2z" fill="#5cc41a" /></svg>
            <Badge>3</Badge>
          </WidgetIcon>
          <Lines><LineText $ls={0.4}>WALMARTCL</LineText><LineText $ls={-0.2} $c="#6ccb5f">+1,57%</LineText></Lines>
        </Widget>
        <StartButton>
          <svg width="29" height="29" viewBox="0 0 29 29">
            <defs><linearGradient id="win" gradientUnits="userSpaceOnUse" x1="0" y1="0" x2="29" y2="29"><stop offset="0" stopColor="#7ceaff" /><stop offset="1" stopColor="#0a93fb" /></linearGradient></defs>
            <path d="M0 0h14v14H0zM15 0h14v14H15zM0 15h14v14H0zM15 15h14v14H15z" fill="url(#win)" />
          </svg>
        </StartButton>
        <SearchBox>
          <Line w={19} h={19} c="#333" sw={2}><circle cx="8" cy="8" r="7" /><path d="m13 13 5 5.500" strokeWidth="2.600" /></Line>
          Buscar
          <Grow />
          <Tiger />
        </SearchBox>
        <Spacer $w={2.5} />
        {apps.map((a, i) => (
          <AppSlot key={i} $active={a.active}>
            {a.icon}
            {a.running && <Running $active={a.active} />}
          </AppSlot>
        ))}
        <Grow />
        <Line w={14} h={8} c="#eee" sw={1.8}><path d="M.5 7.500 7 1l6.500 6.500" /></Line>
        <Spacer $w={23} />
        <svg width="21" height="17" viewBox="0 0 21 17">
          <path d="M3 13C-1 11 0 6 4 6c1-5 9-6 12-2l1 6-4 3z" fill="#c4c4c4" />
          <circle cx="14.500" cy="11" r="5.800" fill="#d8232e" /><path d="m12.200 8.700 4.600 4.600M16.800 8.700l-4.600 4.600" stroke="#fff" strokeWidth="1.500" />
        </svg>
        <Spacer $w={23} />
        <Lines $align="center"><LineText>ESP</LineText><LineText $ls={0.1}>LAA</LineText></Lines>
        <Spacer $w={24} />
        <Line w={20} h={16} c="#fff" sw={1.6}><path d="M.8 6c5-6 13.500-6 18.400 0M3.800 9c3.500-4 9-4 12.400 0M6.500 11.800c2-2.200 5-2.200 7 0" /><circle cx="10" cy="14" r="1.700" fill="#fff" stroke="none" /></Line>
        <Spacer $w={10} />
        <Line w={20} h={16} c="#fff" sw={1.5}><path d="M1 5.500h3L8.500 1.500v13L4 10.500H1zM11 5.500c1 1.500 1 3.500 0 5" /><path d="M13.500 3.500c2.200 2.500 2.200 6.500 0 9M16 1.500c3.500 4 3.500 9 0 13" stroke="#777" /></Line>
        <Spacer $w={10} />
        <Line w={19} h={16} c="#fff" sw={1.5}><path d="M7 4H3C1.500 4 1 5 1 6v6c0 1.500.5 2.500 2 2.500h11c1.500 0 2-1 2-2.500V6c0-1-.5-2-2-2M17.500 7.500v3.500" /><path d="M3 6.500h4V9h3l3-3h1v6.500H3z" fill="#fff" stroke="none" /><path d="M10 0 7.500 5H10l-.5 3.500L12.500 4H10z" fill="#fff" stroke="none" /></Line>
        <Spacer $w={21} />
        <Lines $align="right"><LineText $ls={-0.1}>12:24</LineText><LineText $ls={0.5}>29-07-2025</LineText></Lines>
        <Spacer $w={24} />
      </Taskbar>
    </Screen>
  );
}
